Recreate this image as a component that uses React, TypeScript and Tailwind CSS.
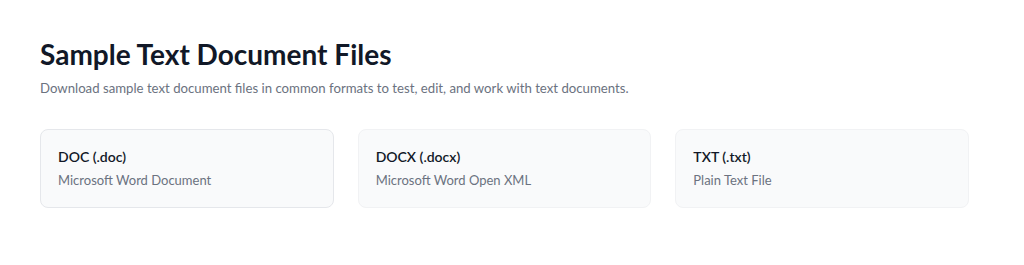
const formats = [
  { title: "DOC (.doc)", desc: "Microsoft Word Document" },
  { title: "DOCX (.docx)", desc: "Microsoft Word Open XML" },
  { title: "TXT (.txt)", desc: "Plain Text File" },
];

export default function App() {
  return (
    <div
      className="min-h-[265px] bg-white px-10 pt-[34px]"
      style={{ fontFamily: "Lato, 'Open Sans', sans-serif" }}
    >
      <div className="w-[929px]">
        <h1 className="text-[28px] leading-[40px] font-bold text-[#111827]">
          Sample Text Document Files
        </h1>
        <p className="mt-[4px] text-[13.2px] leading-5 text-[#6b7280]">
          Download sample text document files in common formats to test, edit, and work with text documents.
        </p>

        <div className="mt-[31px] grid grid-cols-3 gap-6">
          {formats.map((f, i) => (
            <div
              key={f.title}
              className={
                "rounded-lg bg-[#f9fafb] px-[17px] pt-[17px] pb-[17px] border " +
                (i === 0 ? "border-[#e5e7eb]" : "border-[#f1f2f4]")
              }
            >
              <div className="text-[14px] leading-5 font-semibold text-[#111827]">{f.title}</div>
              <div className="mt-[3px] text-[13px] leading-5 text-[#6b7280]">{f.desc}</div>
            </div>
          ))}
        </div>
      </div>
    </div>
  );
}
